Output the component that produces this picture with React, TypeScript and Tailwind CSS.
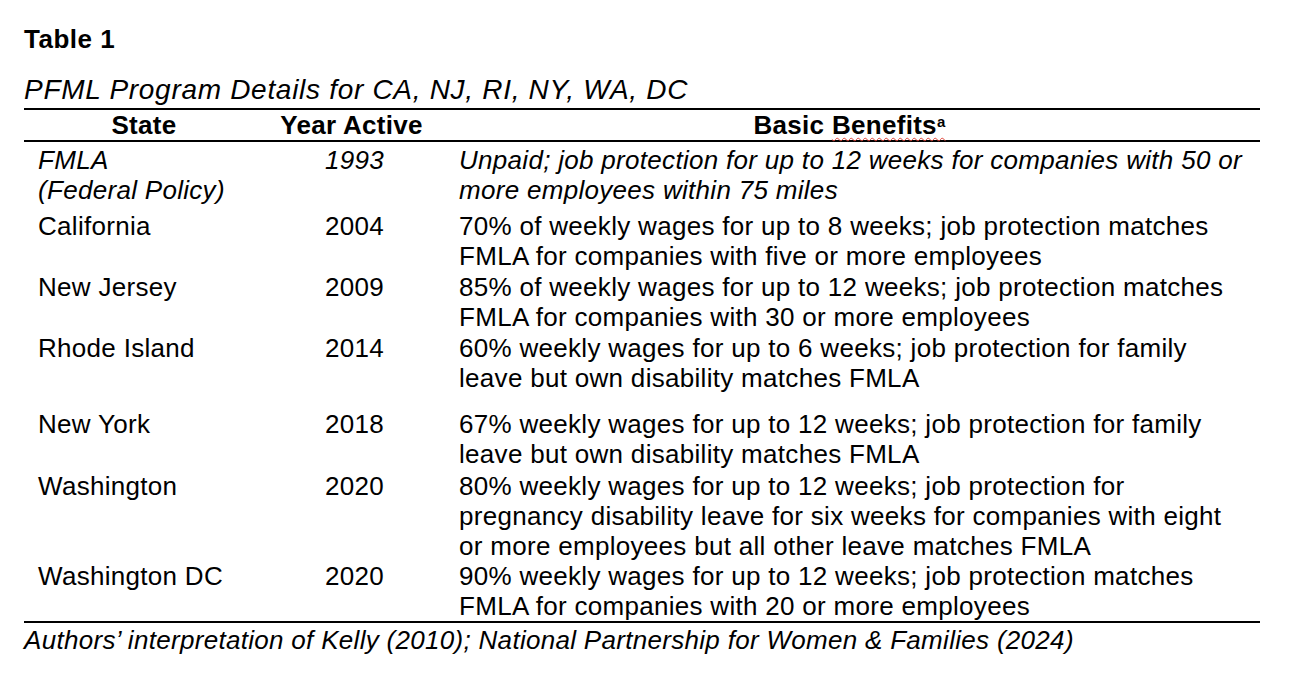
import React from "react";

type Row = {
  state: string[];
  year: string;
  benefits: string[];
  italic?: boolean;
  mt: string;
};

const rows: Row[] = [
  {
    state: ["FMLA", "(Federal Policy)"],
    year: "1993",
    benefits: [
      "Unpaid; job protection for up to 12 weeks for companies with 50 or",
      "more employees within 75 miles",
    ],
    italic: true,
    mt: "mt-[3px]",
  },
  {
    state: ["California"],
    year: "2004",
    benefits: [
      "70% of weekly wages for up to 8 weeks; job protection matches",
      "FMLA for companies with five or more employees",
    ],
    mt: "mt-[6px]",
  },
  {
    state: ["New Jersey"],
    year: "2009",
    benefits: [
      "85% of weekly wages for up to 12 weeks; job protection matches",
      "FMLA for companies with 30 or more employees",
    ],
    mt: "mt-[1px]",
  },
  {
    state: ["Rhode Island"],
    year: "2014",
    benefits: [
      "60% weekly wages for up to 6 weeks; job protection for family",
      "leave but own disability matches FMLA",
    ],
    mt: "mt-[1px]",
  },
  {
    state: ["New York"],
    year: "2018",
    benefits: [
      "67% weekly wages for up to 12 weeks; job protection for family",
      "leave but own disability matches FMLA",
    ],
    mt: "mt-[16px]",
  },
  {
    state: ["Washington"],
    year: "2020",
    benefits: [
      "80% weekly wages for up to 12 weeks; job protection for",
      "pregnancy disability leave for six weeks for companies with eight",
      "or more employees but all other leave matches FMLA",
    ],
    mt: "mt-[2px]",
  },
  {
    state: ["Washington DC"],
    year: "2020",
    benefits: [
      "90% weekly wages for up to 12 weeks; job protection matches",
      "FMLA for companies with 20 or more employees",
    ],
    mt: "mt-[0px]",
  },
];

export default function App() {
  return (
    <div className="min-h-[680px] w-full bg-white text-black font-['Liberation_Sans',Arial,sans-serif]">
      <div className="ml-[24px] w-[1236px] pt-[24px]">
        <div className="text-[26px] leading-[30px] font-bold tracking-[0.5px]">
          Table 1
        </div>
        <div className="mt-[21px] text-[28px] leading-[30px] italic tracking-[0.7px] whitespace-nowrap">
          PFML Program Details for CA, NJ, RI, NY, WA, DC
        </div>
        <div className="mt-[3px] h-[2px] bg-black" />
        <div className="grid grid-cols-[240px_175px_821px] h-[30px] text-[26px] leading-[29px] pt-[1px] font-bold tracking-[0.3px]">
          <div className="text-center">State</div>
          <div className="text-center">Year Active</div>
          <div className="text-center">
            Basic{" "}
            <span className="underline decoration-wavy decoration-[#e0453a] decoration-1 underline-offset-[3px]">
              Benefits<sup className="text-[15px]">a</sup>
            </span>
          </div>
        </div>
        <div className="h-[2px] bg-black" />
        {rows.map((r, i) => (
          <div
            key={i}
            className={`grid grid-cols-[240px_175px_821px] text-[26px] leading-[30px] tracking-[0.3px] ${r.mt} ${
              r.italic ? "italic" : ""
            }`}
          >
            <div className="pl-[14px] whitespace-nowrap">
              {r.state.map((s, j) => (
                <div key={j}>{s}</div>
              ))}
            </div>
            <div className="pl-[61px]">{r.year}</div>
            <div className="pl-[20px] whitespace-nowrap">
              {r.benefits.map((b, j) => (
                <div key={j}>{b}</div>
              ))}
            </div>
          </div>
        ))}
        <div className="h-[2px] bg-black" />
        <div className="mt-[2px] text-[26px] leading-[30px] italic tracking-[0.3px] whitespace-nowrap">
          Authors’ interpretation of Kelly (2010); National Partnership for Women &amp; Families (2024)
        </div>
      </div>
    </div>
  );
}
